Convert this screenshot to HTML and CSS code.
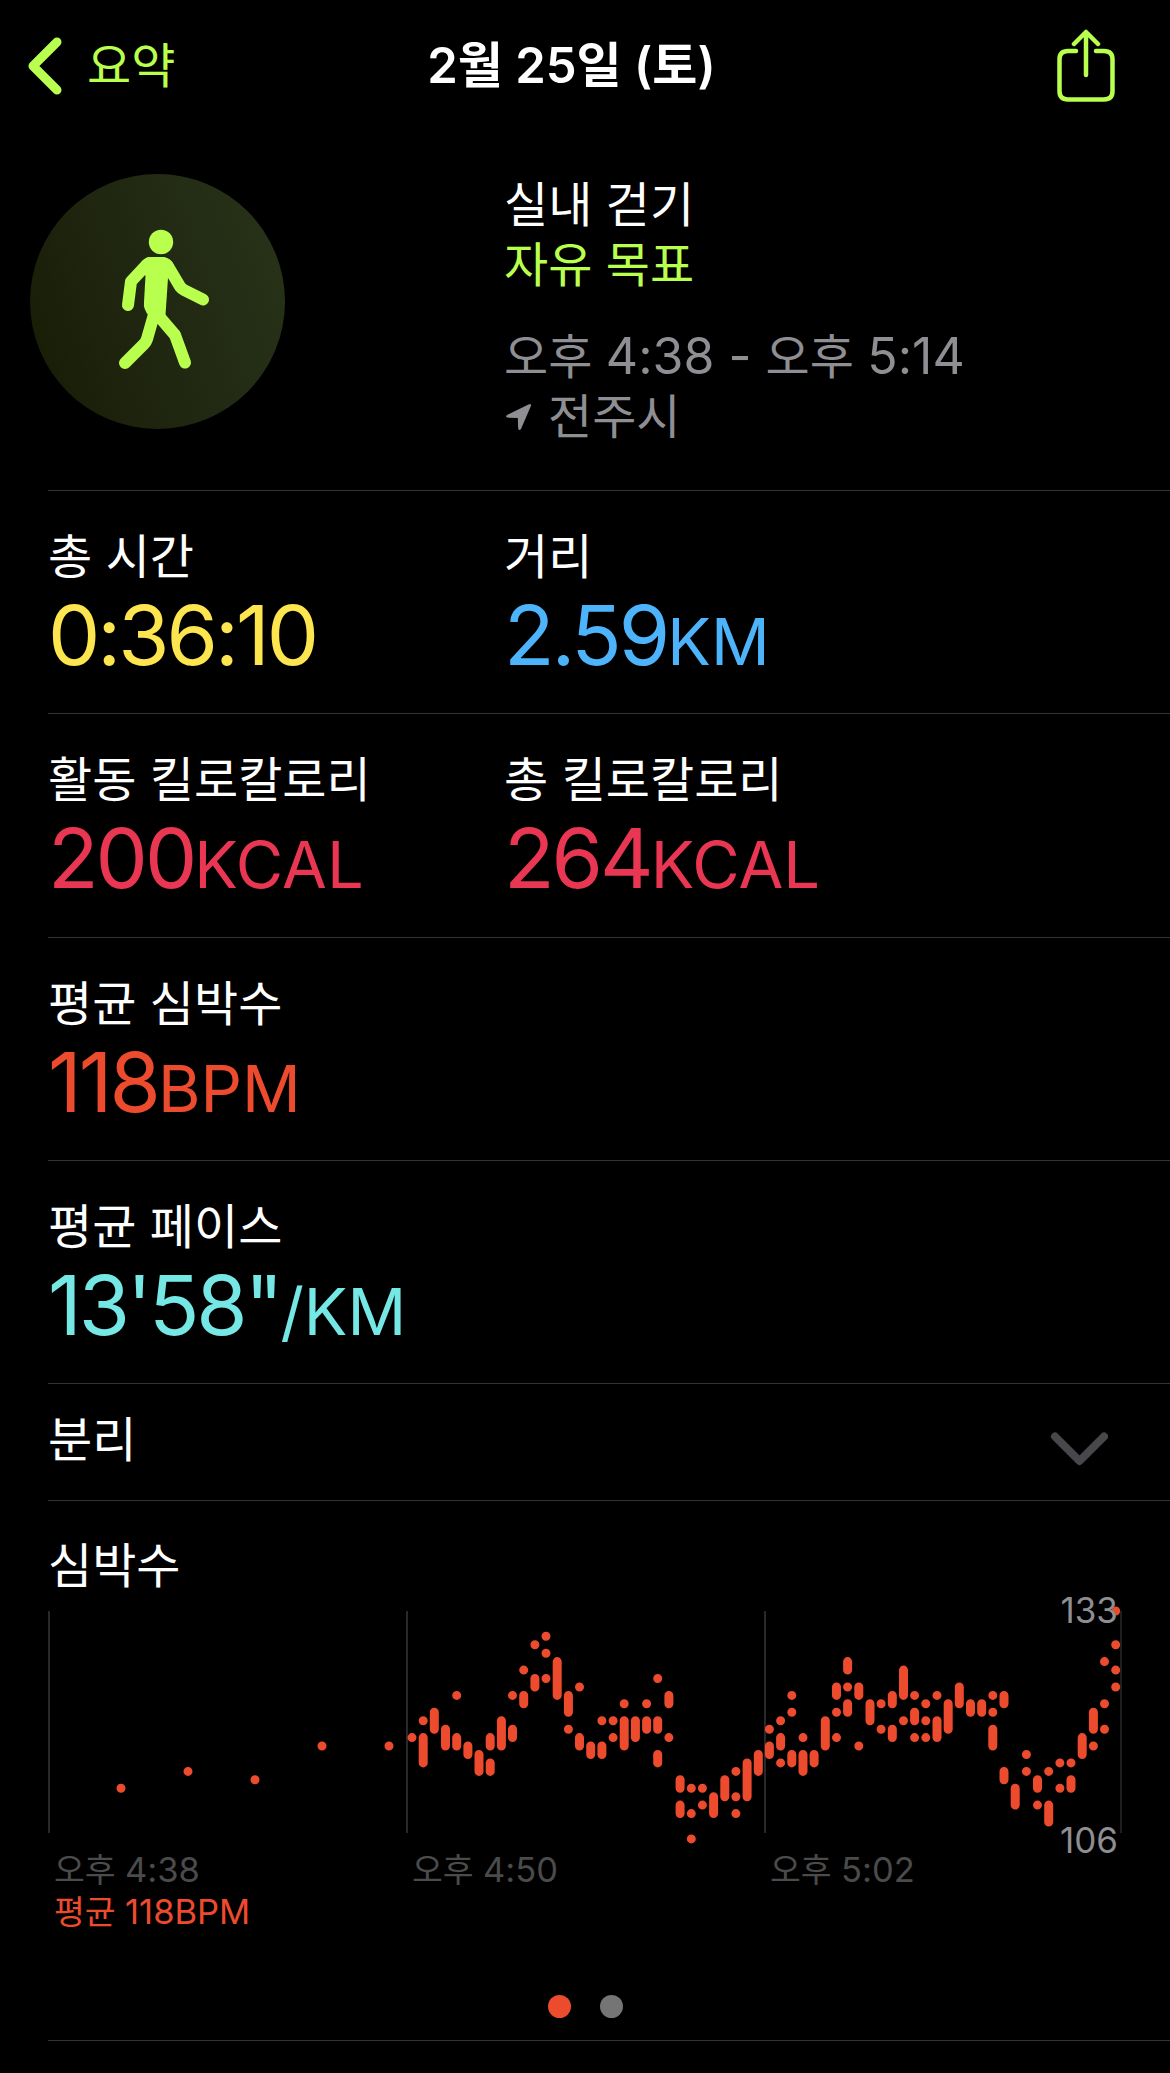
FILE: index.html
```html
<!DOCTYPE html>
<html lang="ko">

<head>
    <meta charset="UTF-8" />
    <meta name="viewport" content="width=device-width, initial-scale=1.0" />
    <title>실내 걷기</title>
    <link rel="stylesheet" href="styles.css">
</head>

<body>
    <header class="navbar">
        <a class="back" href="#">
            <svg class="back-icon" width="34" height="58" viewBox="0 0 34 58">
                <path d="M29 5 L5 29 L29 53" />
            </svg>
            <span>요약</span>
        </a>
        <h1 class="title">2월 25일 (토)</h1>
        <a class="share" href="#">
            <svg width="58" height="74" viewBox="0 0 58 74">
                <path d="M19 22 H11 Q2.5 22 2.5 30.5 V62 Q2.5 70.5 11 70.5 H47 Q55.5 70.5 55.5 62 V30.5 Q55.5 22 47 22 H39" />
                <path d="M29 46 V4 M17 15 L29 3 L41 15" />
            </svg>
        </a>
    </header>

    <section class="hero">
        <div class="badge">
            <svg width="255" height="255" viewBox="0 0 255 255">
                <circle class="walk-fill" cx="131" cy="68" r="12.2" />
                <path class="walk-fill" d="M121 83 H132 Q140 83 144 91 L138 104 L135.500 141 L119 142 Q113 135 114 128 L115.500 102 L110 90 Q115 83 121 83 Z" />
                <path class="walk-limb" d="M119 89 Q117 90 115 92.500 L101 107.500 L98 131" />
                <path class="walk-limb" d="M133 89 Q137 90 139 94 L150 112.500 Q152 115 154 116 L173 125.500" />
                <path class="walk-limb" d="M125 137 L117 165 Q116 168 114 170 L95 189" />
                <path class="walk-limb" d="M127 140 L145 161 L155 188.500" />
            </svg>
        </div>
        <div class="summary">
            <div>실내 걷기</div>
            <div class="goal">자유 목표</div>
            <div class="when">오후 <span class="num">4:38 - </span>오후 <span class="num">5:14</span></div>
            <div class="where">
                <svg width="27" height="28" viewBox="0 0 27 28">
                    <path d="M25.500 1.200 Q26.400 1.500 26 2.800 L16 26 Q14.300 28.200 13.200 25.800 L12.800 15 L2.200 14.600 Q0 13.500 2 12 L24 1.200 Z" />
                </svg>
                <span>전주시</span>
            </div>
        </div>
    </section>

    <main class="list">
        <section class="row">
            <div class="metric">
                <div class="label">총 시간</div>
                <div class="value time">0:36:10</div>
            </div>
            <div class="metric">
                <div class="label">거리</div>
                <div class="value distance">2.59<span class="unit">KM</span></div>
            </div>
        </section>
        <section class="row">
            <div class="metric">
                <div class="label">활동 킬로칼로리</div>
                <div class="value energy">200<span class="unit">KCAL</span></div>
            </div>
            <div class="metric">
                <div class="label">총 킬로칼로리</div>
                <div class="value energy">264<span class="unit">KCAL</span></div>
            </div>
        </section>
        <section class="row">
            <div class="metric">
                <div class="label">평균 심박수</div>
                <div class="value heart">118<span class="unit">BPM</span></div>
            </div>
        </section>
        <section class="row">
            <div class="metric">
                <div class="label">평균 페이스</div>
                <div class="value pace">13'58"<span class="unit">/KM</span></div>
            </div>
        </section>
        <section class="splits">
            <div class="label">분리</div>
            <svg class="expand" width="58" height="36" viewBox="0 0 58 36">
                <path d="M5 5.500 L29.500 30 L54 5.500" />
            </svg>
        </section>
        <section class="chart">
            <div class="label">심박수</div>
            <div class="plot">
                <svg width="1074" height="248" viewBox="0 0 1074 248">
                    <path class="grid" d="M1 10 V232 M359 10 V232 M717 10 V232" />
                    <path class="grid-end" d="M1073 10 V232" />
                    <path class="beats" id="beats" />
                </svg>
                <span class="max">133</span>
                <span class="min">106</span>
            </div>
            <div class="axis">
                <span>오후 <span class="tick">4:38</span></span>
                <span>오후 <span class="tick">4:50</span></span>
                <span>오후 <span class="tick">5:02</span></span>
            </div>
            <div class="average">평균 <span class="tick">118BPM</span></div>
            <div class="pager">
                <span class="dot active"></span>
                <span class="dot"></span>
            </div>
        </section>
    </main>

    <script>
        // 첫 12분: [x, bpm]
        const sparse = [[73, 112], [140, 114], [207, 113], [274, 117], [341, 117]];

        // 이후 구간별 심박수, "최고-최저" 또는 단일 값
        const columns = [
            "118", "120 118-115", "121-119", "119-117", "123 118-117", "117-116", "116-114", "118-117 115-114",
            "120-117", "123 119-118", "126 123-122", "129 125-124", "130 128 125", "127-123", "123-121 119", "124 118-117",
            "117-116", "120 117-116", "120 118", "122 120-117", "120-118", "122 120-119", "125 120-119 116-115", "123-122 118",
            "113-112 110-109", "112 109 106", "112 110", "111-109", "113-111", "114 111 109", "115-111", "116-114",
            "119 117-116", "120 118-117 115", "123 121 116-115", "118 116-114", "116-115", "120-117", "124-123 121 118", "127-126 124 122-121",
            "124-123 117", "122-120", "122 119", "123-122 119-118", "126-123 120", "123 121-120 118", "122 120 118", "123 120-118",
            "122-119", "124-122", "122-121", "122-121", "123 121 119-117", "123-122 114-113", "112-110", "116 114",
            "113-112 110", "114 110-108", "115 112", "115 113-112", "118-116", "121-119 117", "127 122 119", "133 129 126 124"
        ];

        const y = (bpm) => (10 + (133 - bpm) * 8.44).toFixed(1);
        const bar = (x, hi, lo) => `M${x} ${y(hi)} V${(+y(lo) + 0.01).toFixed(2)}`;

        let d = sparse.map(([x, bpm]) => bar(x, bpm, bpm)).join(" ");
        columns.forEach((col, i) => {
            const x = (364 + i * 11.17).toFixed(1);
            col.split(" ").forEach((part) => {
                const [hi, lo] = part.split("-");
                d += " " + bar(x, hi, lo || hi);
            });
        });
        document.getElementById("beats").setAttribute("d", d);
    </script>
</body>

</html>
```

FILE: styles.css
```css
body,
html {
    margin: 0;
    padding: 0;
    background-color: #000;
}

body {
    width: 1170px;
    height: 2073px;
    overflow: hidden;
    color: #fff;
    font-family: Inter, "Noto Sans CJK KR", sans-serif;
    font-size: 48px;
    line-height: 60px;
}

svg {
    display: block;
    fill: none;
    stroke-linecap: round;
    stroke-linejoin: round;
}

.navbar {
    display: grid;
    grid-template-columns: 1fr auto 1fr;
    align-items: center;
    height: 132px;
    padding: 0 55px 0 28px;
    box-sizing: border-box;
}

.back {
    display: flex;
    align-items: center;
    gap: 25px;
    color: #b9ff4e;
    text-decoration: none;
}

.back-icon {
    stroke: #b9ff4e;
    stroke-width: 9;
}

.title {
    margin: 0;
    font-size: 49px;
    font-weight: 600;
    white-space: nowrap;
}

.share {
    justify-self: end;
}

.share svg {
    stroke: #b9ff4e;
    stroke-width: 4.5;
}

.hero {
    display: flex;
    height: 358px;
    padding-left: 30px;
}

.badge {
    width: 255px;
    height: 255px;
    margin-top: 42px;
    border-radius: 50%;
    background: linear-gradient(70deg, #171b04, #212812 50%, #293419);
}

.walk-fill {
    fill: #b9ff4e;
}

.walk-limb {
    stroke: #b9ff4e;
    stroke-width: 12;
}

.summary {
    margin: 43px 0 0 219px;
}

.goal {
    color: #b9ff4e;
}

.summary .num {
    font-size: 50px;
}

.when,
.where {
    color: #8e8e93;
}

.when {
    margin-top: 31px;
    white-space: nowrap;
}

.where {
    display: flex;
    align-items: center;
    gap: 16px;
}

.where svg {
    margin-left: 1px;
    fill: #8e8e93;
}

.list {
    margin-left: 48px;
}

.row,
.splits,
.chart {
    border-top: 1px solid #333335;
    box-sizing: border-box;
}

.row {
    display: grid;
    grid-template-columns: 456px 1fr;
    height: 223.3px;
    padding-top: 36px;
}

.value {
    margin-top: 3px;
    font-size: 83px;
    line-height: 90px;
    letter-spacing: -3px;
    white-space: nowrap;
}

.unit {
    font-size: 65px;
    letter-spacing: 0;
}

.time {
    color: #fce54f;
}

.distance {
    color: #4db4fb;
}

.energy {
    color: #e93652;
}

.heart {
    color: #ed4b2e;
}

.pace {
    color: #75e7e4;
}

.splits {
    display: flex;
    justify-content: space-between;
    height: 117px;
    padding: 26px 62px 0 0;
}

.expand {
    margin-top: 21px;
    stroke: #48484c;
    stroke-width: 8;
}

.chart {
    position: relative;
    height: 541px;
    padding-top: 35px;
    border-bottom: 1px solid #333335;
}

.plot {
    position: relative;
    height: 248px;
    margin-top: 5px;
}

.grid {
    stroke: #29292a;
    stroke-width: 2;
    stroke-linecap: butt;
}

.grid-end {
    stroke: #29292a;
    stroke-width: 1.500;
    stroke-linecap: butt;
}

.beats {
    stroke: #ed4b2e;
    stroke-width: 9;
}

/* 그래프 위에 겹치는 최고/최저 값 */
.max,
.min {
    position: absolute;
    right: 52px;
    color: #8e8e93;
    font-size: 35px;
    line-height: 40px;
}

.max {
    top: -11px;
}

.min {
    bottom: -11px;
}

.axis {
    display: grid;
    grid-template-columns: 358px 358px 1fr;
    margin-left: 6px;
    color: #4b4b4b;
    font-size: 33.5px;
    line-height: 42px;
}

.average {
    margin-left: 6px;
    color: #ed4b2e;
    font-size: 33.5px;
    line-height: 42px;
}

.tick {
    font-size: 34.5px;
}

.pager {
    display: flex;
    gap: 29px;
    margin: 62px 0 0 500px;
}

.dot {
    width: 23px;
    height: 23px;
    border-radius: 50%;
    background-color: #757575;
}

.dot.active {
    background-color: #ed4b2e;
}
```
